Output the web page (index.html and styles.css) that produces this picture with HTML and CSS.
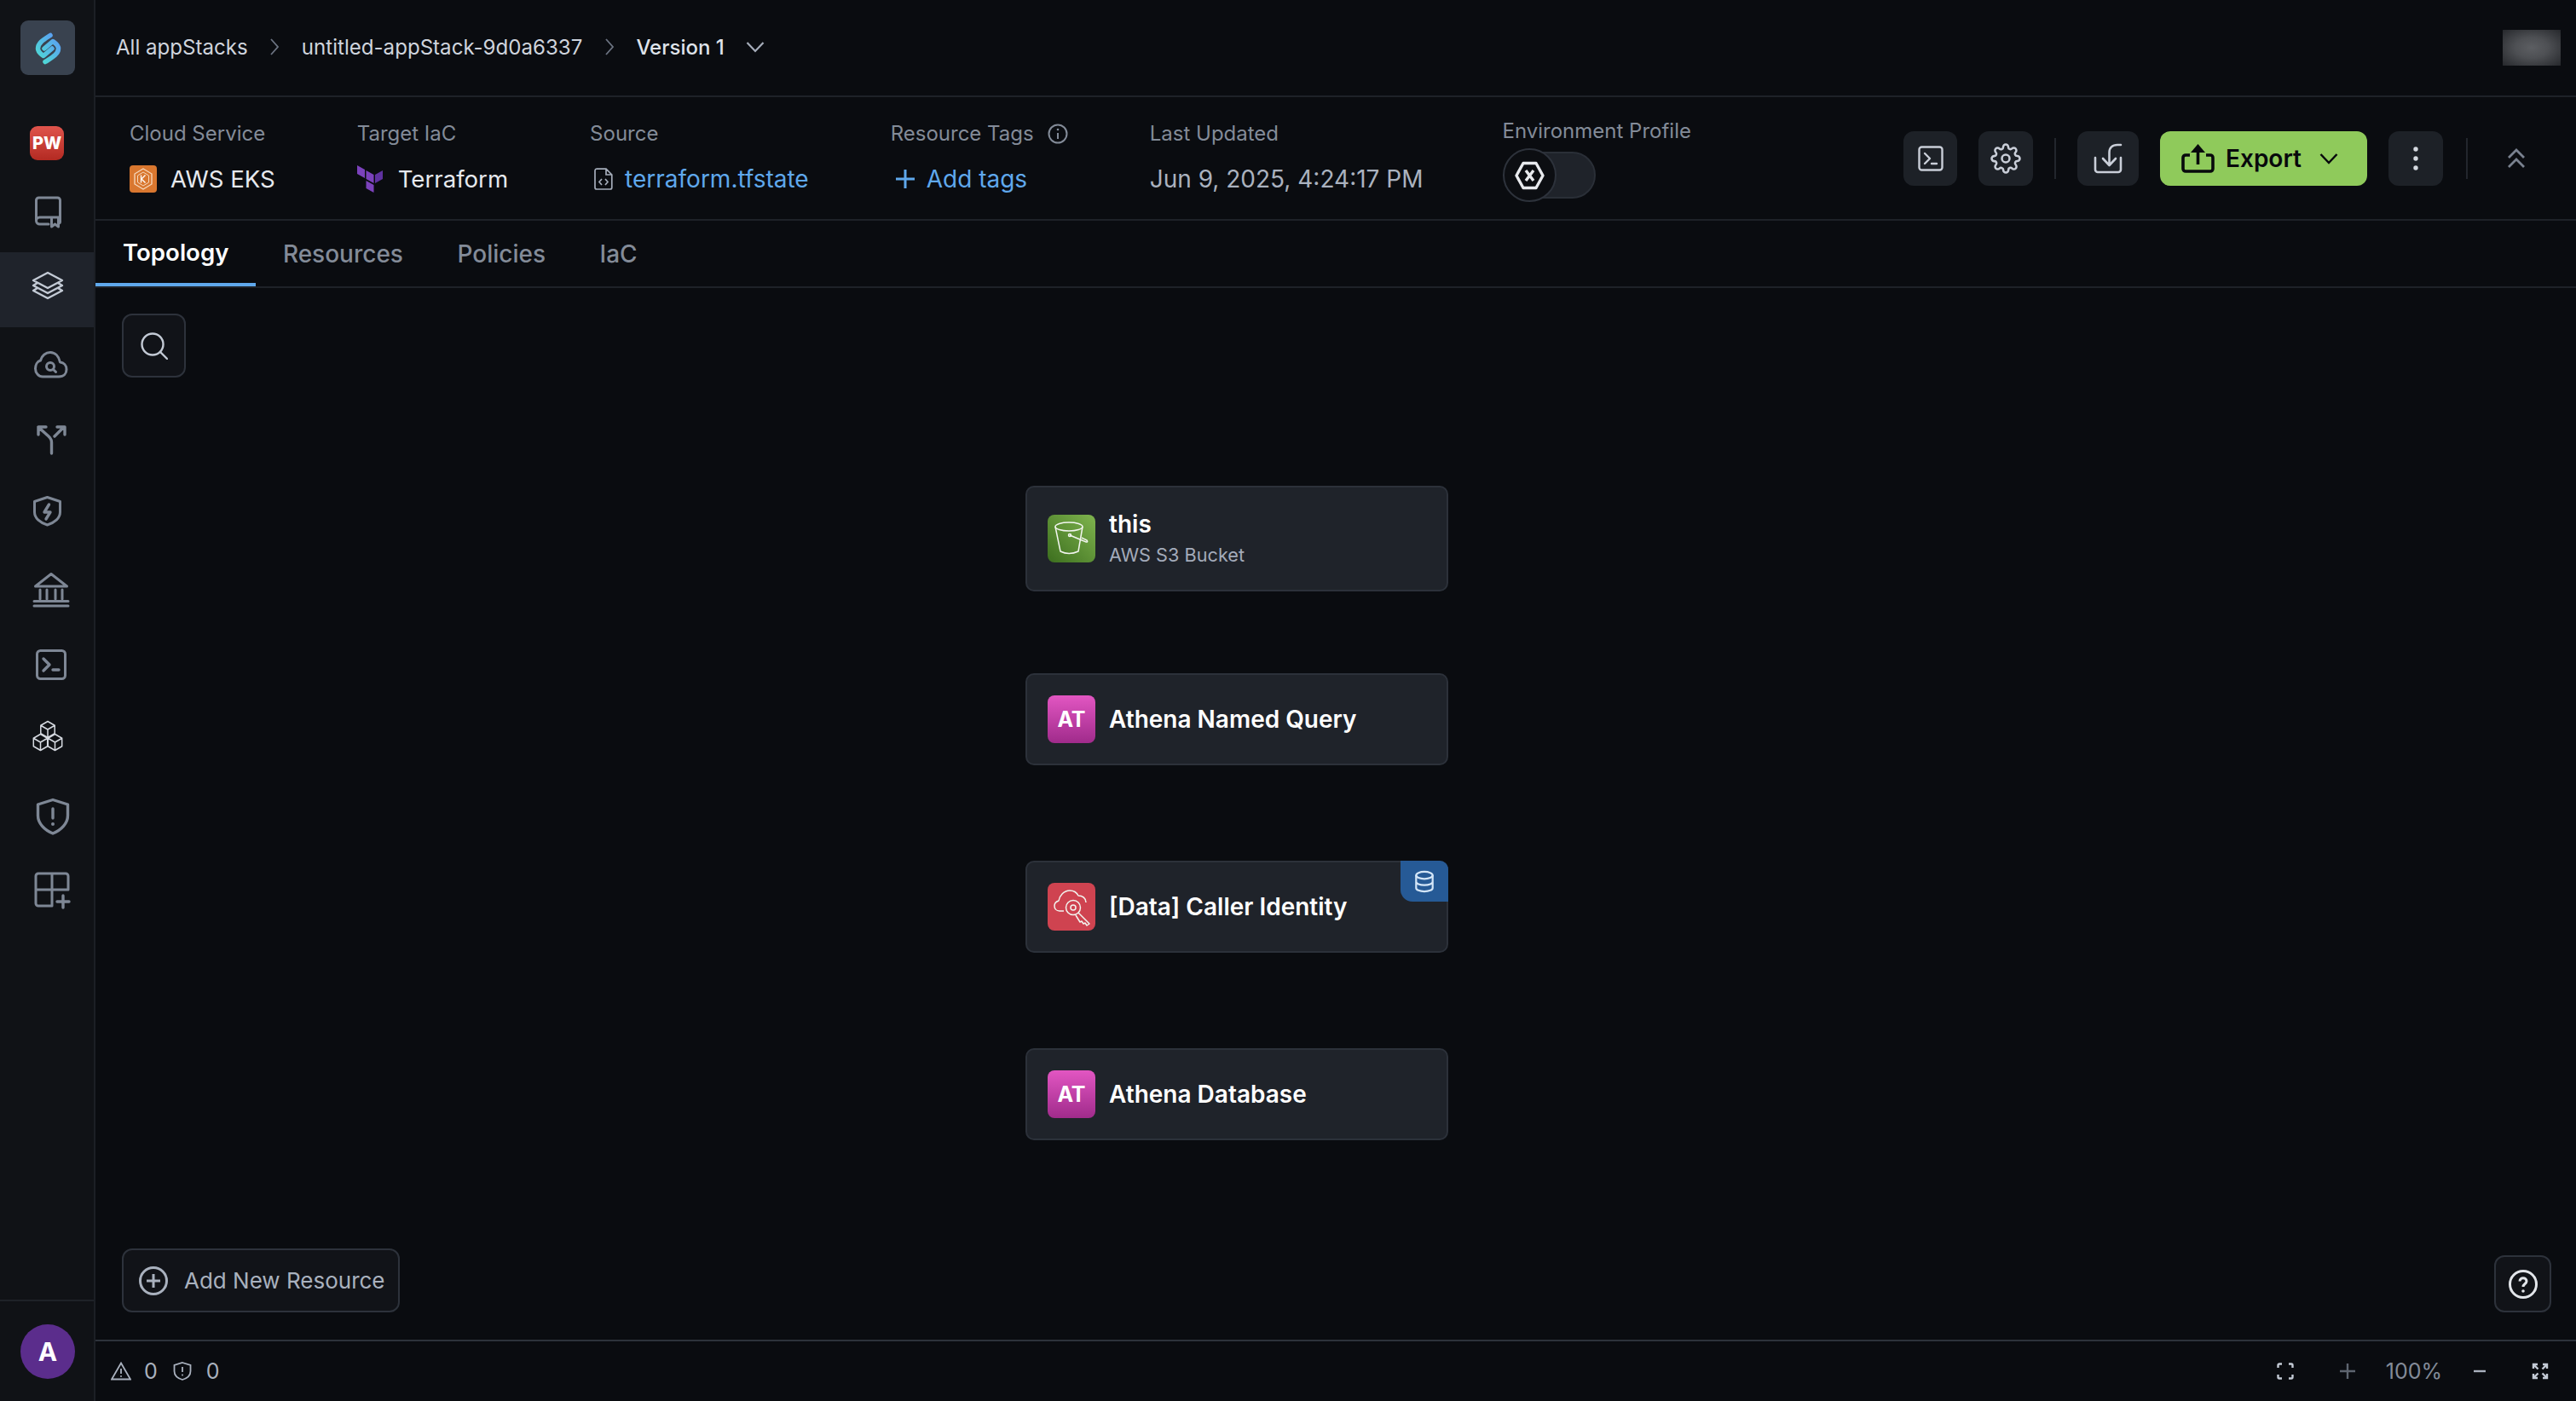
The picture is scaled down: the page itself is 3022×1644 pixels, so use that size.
FILE: index.html
```html
<!DOCTYPE html>
<html lang="en">
<head>
<meta charset="utf-8">
<title>appStack Topology</title>
<link rel="stylesheet" href="styles.css">
</head>
<body>
<div class="app">
  <aside class="sidebar">
    <div class="logo">
      <svg class="logo-mark" viewBox="0 0 52 52">
        <defs><linearGradient id="lg" x1="0" y1="1" x2="1" y2="0"><stop offset="0" stop-color="#4fd6d6"/><stop offset="1" stop-color="#5aa2f2"/></linearGradient></defs>
        <path d="M29 11.500C22 16 14.500 20 14.500 27 14.500 30 16.500 32 19 34L21 35.500 31 27" fill="none" stroke="url(#lg)" stroke-width="5.500" stroke-linecap="round" stroke-linejoin="round"/>
        <path d="M23 42.500C30 38 38.500 34 38.500 27 38.500 24 36.500 22 34 20L32 18.500 22 27" fill="none" stroke="url(#lg)" stroke-width="5.500" stroke-linecap="round" stroke-linejoin="round"/>
      </svg>
    </div>
    <nav class="nav">
      <div class="nav-item"><span class="pw">PW</span></div>
      <div class="nav-item"><svg class="nav-icon" viewBox="0 0 56 56"><path d="M15.500 35V11a3 3 0 0 1 3-3h22a3 3 0 0 1 3 3v25a2 2 0 0 1-1 2M15.500 35a4 4 0 0 1 4-4h24M15.500 35a4 4 0 0 0 4 4H30M33.500 32v10l4-3 4 3V32"/></svg></div>
      <div class="nav-item active"><svg class="nav-icon light" viewBox="0 0 56 56"><path d="M29 8 46 17 29 26 12 17ZM17 20 12 23 29 32 46 23 41 20M17 26 12 29 29 38 46 29 41 26"/></svg></div>
      <div class="nav-item"><svg class="nav-icon" viewBox="0 0 56 56"><path d="M23 42H42C48 42 51 38 51 33.500 51 29 48 25.500 43.500 25 42 18 37.500 13.500 32 13.500 26.500 13.500 22 17.500 20.500 23 16.500 24 14.500 28.500 14.500 32.500 14.500 38 18.500 42 23 42Z"/><circle cx="32" cy="30" r="4.500"/><path d="M35.500 33.500 38.500 36.500"/></svg></div>
      <div class="nav-item"><svg class="nav-icon thick" viewBox="0 0 56 56"><path d="M33.500 44V31C33.500 25 28 23 18 13M18 22V13H27M37 24 48 13M40 13H49V22"/></svg></div>
      <div class="nav-item"><svg class="nav-icon" viewBox="0 0 56 56"><path d="M28.500 7.500 43.500 12.500V25C43.500 32 37 37.500 28.500 40 20 37.500 13.500 32 13.500 25V12.500Z"/><path class="fat" d="M30.500 16 25 25H32L27 33"/></svg></div>
      <div class="nav-item"><svg class="nav-icon" viewBox="0 0 56 56"><path d="M33 9.500 14.500 24H51.500ZM20 28V39M28 28V39M38 28V39M46 28V39M13 41.500H53M13 47H53"/></svg></div>
      <div class="nav-item"><svg class="nav-icon" viewBox="0 0 56 56"><rect x="16.500" y="11.500" width="33" height="33" rx="4"/><path class="fat" d="M24 21 31 28 24 35M35 34H42"/></svg></div>
      <div class="nav-item"><svg class="nav-icon cubes" viewBox="0 0 56 56"><g transform="translate(29 16)"><path d="M0-9.500 8.200-4.750V4.750L0 9.500-8.200 4.750V-4.750ZM-8.200-4.750 0 0 8.200-4.750M0 0V9.500"/></g><g transform="translate(20.500 31)"><path d="M0-9.500 8.200-4.750V4.750L0 9.500-8.200 4.750V-4.750ZM-8.200-4.750 0 0 8.200-4.750M0 0V9.500"/></g><g transform="translate(37.500 31)"><path d="M0-9.500 8.200-4.750V4.750L0 9.500-8.200 4.750V-4.750ZM-8.200-4.750 0 0 8.200-4.750M0 0V9.500"/></g></svg></div>
      <div class="nav-item"><svg class="nav-icon thick" viewBox="0 0 56 56"><path d="M35 10.500 52.500 16V29C52.500 38 45 46 35 50 25 46 17.500 38 17.500 29V16ZM35 21V32"/><circle class="dot" cx="35" cy="39" r="2"/></svg></div>
      <div class="nav-item"><svg class="nav-icon" viewBox="0 0 56 56"><path d="M33 47H18a3 3 0 0 1-3-3V12a3 3 0 0 1 3-3H50a3 3 0 0 1 3 3V28H15M34 9V47"/><path class="fat" d="M47 35V49M40 42H54"/></svg></div>
    </nav>
    <div class="user"><span class="avatar">A</span></div>
  </aside>

  <main class="main">
    <header class="topbar">
      <span class="crumb">All appStacks</span>
      <svg class="crumb-sep" viewBox="0 0 12 22"><path d="M2 2 10 11 2 20"/></svg>
      <span class="crumb">untitled-appStack-9d0a6337</span>
      <svg class="crumb-sep" viewBox="0 0 12 22"><path d="M2 2 10 11 2 20"/></svg>
      <span class="crumb current">Version 1</span>
      <svg class="crumb-down" viewBox="0 0 22 14"><path d="M1.500 2 11 12 20.500 2"/></svg>
      <div class="blurred"></div>
    </header>

    <section class="infobar">
      <div class="meta">
        <div class="field">
          <span class="label">Cloud Service</span>
          <span class="value">
            <svg class="val-icon" viewBox="0 0 32 32"><rect width="32" height="32" rx="4" fill="#d9772f"/><path d="M16 4 26 10V22L16 28 6 22V10Z" fill="none" stroke="#f6d9bd" stroke-width="1.300"/><path d="M16 8 22.500 12V20L16 24 9.500 20V12Z" fill="none" stroke="#f6d9bd" stroke-width="1"/><path d="M13.500 11.500V20.500M18.500 11.500 14 16 18.500 20.500" fill="none" stroke="#fff" stroke-width="1.300"/></svg>
            AWS EKS
          </span>
        </div>
        <div class="field">
          <span class="label">Target IaC</span>
          <span class="value">
            <svg class="val-icon tf" viewBox="0 0 30 32"><path d="M0 0 9 5V15L0 10Z" fill="#7b42bc"/><path d="M10.500 6 19.500 11V21L10.500 16Z" fill="#7b42bc"/><path d="M21 11 30 6V16L21 21Z" fill="#5f32a0"/><path d="M10.500 18 19.500 23V32L10.500 27Z" fill="#7b42bc"/></svg>
            Terraform
          </span>
        </div>
        <div class="field">
          <span class="label">Source</span>
          <span class="value link">
            <svg class="val-icon file" viewBox="0 0 22 26"><path d="M3 1.200H14L20.800 8V23a2 2 0 0 1-2 2H3a2 2 0 0 1-2-2V3a2 2 0 0 1 2-1.800ZM14 1.200V8H20.800M9 13 6 16.500 9 20M13 13 16 16.500 13 20"/></svg>
            terraform.tfstate
          </span>
        </div>
        <div class="field">
          <span class="label">Resource Tags
            <svg class="info" viewBox="0 0 24 24"><circle cx="12" cy="12" r="10.500"/><path d="M12 11V18"/><circle class="dot" cx="12" cy="7" r="1.300"/></svg>
          </span>
          <span class="value link">
            <svg class="plus" viewBox="0 0 24 24"><path d="M12 1V23M1 12H23"/></svg>
            Add tags
          </span>
        </div>
        <div class="field">
          <span class="label">Last Updated</span>
          <span class="value muted">Jun 9, 2025, 4:24:17 PM</span>
        </div>
        <div class="field env">
          <span class="label">Environment Profile</span>
          <div class="toggle">
            <span class="track"></span>
            <span class="knob"><svg viewBox="0 0 35 34"><path class="hex" d="M10 2.500H25L33 17 25 31.500H10L2 17Z"/><path class="cross" d="M13 11 22 23M22 11 13 23"/></svg></span>
          </div>
        </div>
      </div>
      <div class="actions">
        <button class="icon-btn narrow"><svg class="act" viewBox="0 0 30 30"><rect x="1.500" y="1.500" width="27" height="27" rx="3"/><path d="M8 9 14 15 8 21M16 21H22"/></svg></button>
        <button class="icon-btn"><svg class="act gear" viewBox="0 0 24 24"><path d="M12 15a3 3 0 1 0 0-6 3 3 0 0 0 0 6z"/><path d="M19.400 15a1.650 1.650 0 0 0 .33 1.820l.06.06a2 2 0 0 1 0 2.830 2 2 0 0 1-2.830 0l-.06-.06a1.650 1.650 0 0 0-1.820-.33 1.650 1.650 0 0 0-1 1.510V21a2 2 0 0 1-2 2 2 2 0 0 1-2-2v-.09A1.650 1.650 0 0 0 9 19.400a1.650 1.650 0 0 0-1.820.33l-.06.06a2 2 0 0 1-2.830 0 2 2 0 0 1 0-2.830l.06-.06a1.650 1.650 0 0 0 .33-1.820 1.650 1.650 0 0 0-1.510-1H3a2 2 0 0 1-2-2 2 2 0 0 1 2-2h.09A1.650 1.650 0 0 0 4.600 9a1.650 1.650 0 0 0-.33-1.820l-.06-.06a2 2 0 0 1 0-2.830 2 2 0 0 1 2.830 0l.06.06a1.650 1.650 0 0 0 1.820.33H9a1.650 1.650 0 0 0 1-1.510V3a2 2 0 0 1 2-2 2 2 0 0 1 2 2v.09a1.650 1.650 0 0 0 1 1.510 1.650 1.650 0 0 0 1.820-.33l.06-.06a2 2 0 0 1 2.830 0 2 2 0 0 1 0 2.830l-.06.06a1.650 1.650 0 0 0-.33 1.820V9a1.650 1.650 0 0 0 1.510 1H21a2 2 0 0 1 2 2 2 2 0 0 1-2 2h-.09a1.650 1.650 0 0 0-1.510 1z"/></svg></button>
        <span class="divider"></span>
        <button class="icon-btn wide"><svg class="act import" viewBox="0 0 34 36"><path d="M2 17V31a3 3 0 0 0 3 3H29a3 3 0 0 0 3-3V17M32 2H28C22 2 18.500 5.500 18.500 11V25M11 18 18.500 26 26 18"/></svg></button>
        <button class="export">
          <svg class="exp-icon" viewBox="0 0 39 34"><path d="M10 13H5a3 3 0 0 0-3 3V29a3 3 0 0 0 3 3H34a3 3 0 0 0 3-3V16a3 3 0 0 0-3-3H29M19.500 24V4"/><path class="exp-head" d="M19.500 0 28 10H11Z"/></svg>
          <span>Export</span>
          <svg class="exp-chev" viewBox="0 0 22 14"><path d="M1.500 2 11 12 20.500 2"/></svg>
        </button>
        <button class="icon-btn"><svg class="dots" viewBox="0 0 8 28"><circle cx="4" cy="3" r="2.700"/><circle cx="4" cy="14" r="2.700"/><circle cx="4" cy="25" r="2.700"/></svg></button>
        <span class="divider last"></span>
        <svg class="collapse" viewBox="0 0 22 24"><path d="M2 11 11 2 20 11M2 22 11 13 20 22"/></svg>
      </div>
    </section>

    <nav class="tabs">
      <span class="tab selected">Topology</span>
      <span class="tab">Resources</span>
      <span class="tab">Policies</span>
      <span class="tab">IaC</span>
    </nav>

    <section class="canvas">
      <button class="tool search"><svg viewBox="0 0 32 32"><circle cx="14" cy="14" r="12.500"/><path d="M23 23 31 31"/></svg></button>

      <div class="node tall">
        <span class="res green"><svg viewBox="0 0 56 56"><ellipse cx="25" cy="14" rx="16" ry="5"/><path d="M9 14 15 43Q25 48 36 43L41 14M26 24 44 31.500Q48 33 46 30L40 27"/><circle cx="26" cy="24" r="1.500"/></svg></span>
        <div class="res-text">
          <span class="res-name">this</span>
          <span class="res-sub">AWS S3 Bucket</span>
        </div>
      </div>
      <div class="node">
        <span class="res pink">AT</span>
        <span class="res-name">Athena Named Query</span>
      </div>
      <div class="node">
        <span class="res red"><svg viewBox="0 0 56 56"><path d="M19 33H14C10 33 8 30 8 27 8 24 10 22 13 21 14 15 19 9 26 9 31 9 34 11 36 15 41 15 45 18 45 23"/><circle cx="30" cy="29" r="8.500"/><circle cx="30" cy="29" r="3"/><path d="M36 35 49 48 46 50 44 47 42 48 40 45 38 46 33 38"/></svg></span>
        <span class="res-name">[Data] Caller Identity</span>
        <span class="badge"><svg viewBox="0 0 26 28"><ellipse cx="13" cy="6" rx="10.500" ry="4.500"/><path d="M2.500 6V22C2.500 24.500 7 26.500 13 26.500S23.500 24.500 23.500 22V6M2.500 14C2.500 16.500 7 18.500 13 18.500S23.500 16.500 23.500 14"/></svg></span>
      </div>
      <div class="node">
        <span class="res pink">AT</span>
        <span class="res-name">Athena Database</span>
      </div>

      <button class="add-res">
        <svg viewBox="0 0 34 34"><circle cx="17" cy="17" r="15.500"/><path d="M17 9V25M9 17H25"/></svg>
        Add New Resource
      </button>
      <button class="tool help"><svg viewBox="0 0 34 34"><circle cx="17" cy="17" r="15.500"/><path d="M13 13.500C13 8.500 21 8.500 21 13.500 21 16.500 17 16.500 17 20"/><circle class="dot" cx="17" cy="25" r="1.800"/></svg></button>
    </section>

    <footer class="statusbar">
      <div class="stats">
        <svg class="st warn" viewBox="0 0 24 22"><path d="M12 1.500 23 20.500H1ZM12 8V14"/><circle class="dot" cx="12" cy="17" r="1"/></svg>
        <span class="count">0</span>
        <svg class="st shield" viewBox="0 0 22 22"><path d="M11 1 20.500 4V11C20.500 16 16 19.500 11 21 6 19.500 1.500 16 1.500 11V4ZM11 6V12"/><circle class="dot" cx="11" cy="15.500" r="1"/></svg>
        <span class="count">0</span>
      </div>
      <div class="zoom">
        <svg class="zi fit" viewBox="0 0 20 20"><path d="M1.500 6V3a1.500 1.500 0 0 1 1.500-1.500H6M14 1.500H17A1.500 1.500 0 0 1 18.500 3V6M18.500 14V17A1.500 1.500 0 0 1 17 18.500H14M6 18.500H3A1.500 1.500 0 0 1 1.500 17V14"/></svg>
        <svg class="zi zplus" viewBox="0 0 20 20"><path d="M10 1V19M1 10H19"/></svg>
        <span class="pct">100%</span>
        <svg class="zi zminus" viewBox="0 0 16 6"><path d="M1 3H15"/></svg>
        <svg class="zi expand" viewBox="0 0 20 20"><path d="M2 7V2H7M13 2H18V7M18 13V18H13M7 18H2V13M2 2 7.500 7.500M18 2 12.500 7.500M18 18 12.500 12.500M2 18 7.500 12.500"/></svg>
      </div>
    </footer>
  </main>
</div>
</body>
</html>
```

FILE: styles.css
```css
* { box-sizing: border-box; }
html, body { margin: 0; height: 100%; }
body {
  background: #0a0c10;
  color: #e6e9ee;
  font-family: Inter, "Liberation Sans", sans-serif;
  overflow: hidden;
}
button { font-family: inherit; cursor: pointer; }
svg { display: block; flex: none; }

.app { display: flex; width: 3022px; height: 1644px; }

/* Sidebar */
.sidebar {
  width: 112px;
  flex: none;
  display: flex;
  flex-direction: column;
  background: #101216;
  border-right: 2px solid #1c1f25;
}
.logo {
  width: 64px; height: 64px;
  margin: 24px 0 0 24px;
  background: #39424f;
  border-radius: 9px;
  display: flex; align-items: center; justify-content: center;
}
.logo-mark { width: 52px; height: 52px; }
.nav { margin-top: 32px; flex: 1; }
.nav-item {
  height: 88px;
  display: flex; align-items: center; justify-content: center;
}
.nav-item.active { background: #1f232b; }
.nav-icon {
  width: 56px; height: 56px;
  fill: none;
  stroke: #7e8795;
  stroke-width: 3;
  stroke-linecap: round;
  stroke-linejoin: round;
}
.nav-icon.light { stroke: #c3cad5; stroke-width: 2.4; }
.nav-icon.thick { stroke-width: 3.4; }
.nav-icon.cubes { stroke: #d5d9e0; stroke-width: 1.5; }
.nav-icon .fat { stroke-width: 3.4; }
.nav-icon .dot { fill: #7e8795; stroke: none; }
.pw {
  width: 40px; height: 40px;
  margin-top: 8px;
  border-radius: 9px;
  background: linear-gradient(180deg, #e0544c, #b32a22);
  color: #fff;
  font-size: 20px; font-weight: 800;
  display: flex; align-items: center; justify-content: center;
}
.user {
  height: 119px;
  border-top: 2px solid #1e2228;
  padding: 27px 0 0 24px;
}
.avatar {
  width: 64px; height: 64px;
  border-radius: 50%;
  background: #5b2d8c;
  color: #fff;
  font-size: 30px; font-weight: 700;
  display: flex; align-items: center; justify-content: center;
}

/* Main */
.main { flex: 1; display: flex; flex-direction: column; min-width: 0; }

.topbar {
  height: 114px;
  flex: none;
  display: flex; align-items: center;
  padding: 0 18px 2px 24px;
  border-bottom: 2px solid #1e2228;
}
.crumb { font-size: 24.1px; color: #cfd4dd; white-space: nowrap; }
.crumb.current { font-size: 24px; font-weight: 500; color: #dfe3ea; }
.crumb-sep {
  width: 12px; height: 22px;
  margin: 0 25.5px;
  fill: none; stroke: #6c7482; stroke-width: 1.8;
}
.crumb-down {
  width: 22px; height: 14px;
  margin-left: 25px;
  fill: none; stroke: #a6adba; stroke-width: 2.2;
}
.blurred {
  width: 68px; height: 42px;
  margin-left: auto;
  margin-bottom: -2px;
  background: radial-gradient(ellipse at center, #5c5e62 0%, #4e5054 40%, #26282c 100%);
}

.infobar {
  height: 145px;
  flex: none;
  display: flex;
  padding: 0 59px 0 40px;
  border-bottom: 2px solid #1e2228;
}
.meta { display: flex; gap: 96px; padding-top: 26px; }
.field { display: flex; flex-direction: column; }
.label {
  font-size: 24px;
  line-height: 34px;
  color: #838b98;
  white-space: nowrap;
  display: flex; align-items: center; gap: 16px;
}
.value {
  margin-top: 18px;
  font-size: 27.6px;
  line-height: 36px;
  color: #e6e9ee;
  white-space: nowrap;
  display: flex; align-items: center; gap: 16px;
}
.value.link { font-size: 28px; color: #5fa8ec; }
.value.muted { font-size: 28px; color: #aab2bf; }
.val-icon { width: 32px; height: 32px; }
.val-icon.tf { width: 30px; height: 32px; margin-right: 2px; }
.val-icon.file {
  width: 22px; height: 26px;
  margin: 0 -2px 0 5px;
  fill: none; stroke: #a5adba; stroke-width: 1.700;
}
.info { width: 24px; height: 24px; fill: none; stroke: #838b98; stroke-width: 2; }
.info .dot { fill: #838b98; stroke: none; }
.plus {
  width: 24px; height: 24px;
  margin: 0 -3px 0 5px;
  fill: none; stroke: #5fa8ec; stroke-width: 3;
}
.env { margin: -3px 0 0 -3px; }
.toggle { position: relative; width: 109px; height: 63px; margin-top: 3px; }
.track {
  position: absolute; left: 4px; top: 4px;
  width: 105px; height: 55px;
  border-radius: 28px;
  background: #1f232a;
  border: 2px solid #2a2f37;
}
.knob {
  position: absolute; left: 0; top: 0;
  width: 63px; height: 63px;
  border-radius: 50%;
  background: #0c0e12;
  border: 2px solid #2d323b;
  display: flex; align-items: center; justify-content: center;
}
.knob svg { width: 35px; height: 34px; fill: none; }
.hex { stroke: #e8eaee; stroke-width: 3.4; stroke-linejoin: round; }
.cross { stroke: #e8eaee; stroke-width: 3.4; }

.actions { margin-left: auto; align-self: center; display: flex; align-items: center; gap: 25px; }
.icon-btn {
  width: 64px; height: 64px;
  border: 0; border-radius: 12px;
  background: #1d2127;
  display: flex; align-items: center; justify-content: center;
  padding: 0;
}
.icon-btn.narrow { width: 63px; }
.icon-btn.wide { width: 72px; }
.act {
  width: 30px; height: 30px;
  fill: none; stroke: #c9ced8; stroke-width: 2.400;
  stroke-linecap: round; stroke-linejoin: round;
}
.act.gear { width: 36px; height: 36px; stroke-width: 1.700; }
.act.import { width: 34px; height: 36px; stroke-width: 2.600; }
.divider { width: 2px; height: 48px; background: #22262d; }
.divider.last { margin-left: 2px; }
.export {
  width: 243px; height: 64px;
  border: 0; border-radius: 12px;
  background: #8fca5b;
  color: #08090c;
  font-size: 28px; font-weight: 600;
  display: flex; align-items: center;
  padding: 0 0 0 25px;
}
.exp-icon { width: 39px; height: 34px; margin-right: 13px; fill: none; stroke: #08090c; stroke-width: 3.600; stroke-linejoin: round; }
.exp-head { fill: #08090c; stroke: none; }
.exp-chev { width: 22px; height: 14px; margin-left: 21px; fill: none; stroke: #08090c; stroke-width: 2.500; }
.dots { width: 8px; height: 28px; fill: #d5d9e0; }
.collapse {
  width: 22px; height: 24px;
  margin-left: 21px;
  fill: none; stroke: #7a8290; stroke-width: 2.800;
}

.tabs {
  height: 79px;
  flex: none;
  display: flex;
  border-bottom: 2px solid #1e2228;
}
.tab {
  padding: 0 31.5px 0 32px;
  font-size: 28px; font-weight: 500;
  line-height: 78px;
  color: #838b98;
  border-bottom: 4px solid transparent;
  height: 77px;
}
.tab.selected {
  font-size: 27.6px;
  line-height: 74px;
  color: #fff;
  font-weight: 600;
  border-bottom-color: #5fa8ec;
}

/* Canvas */
.canvas {
  position: relative;
  flex: 1;
  display: flex; flex-direction: column;
  padding: 232px 0 0 1091px;
  min-height: 0;
}
.node {
  position: relative;
  width: 496px;
  height: 108px;
  margin-bottom: 112px;
  flex: none;
  background: #1f232a;
  border: 2px solid #2c313a;
  border-radius: 10px;
  display: flex; align-items: center; gap: 16px;
  padding-left: 24px;
}
.node.tall { height: 124px; margin-bottom: 96px; }
.res {
  width: 56px; height: 56px;
  flex: none;
  border-radius: 8px;
  display: flex; align-items: center; justify-content: center;
  color: #fff;
  font-size: 25px; font-weight: 700;
}
.res svg { width: 56px; height: 56px; fill: none; stroke: #f2f5ef; stroke-width: 1.500; stroke-linejoin: round; }
.green { background: linear-gradient(45deg, #3c6e1e, #7fb44e); }
.pink { background: linear-gradient(180deg, #e256c2, #a02b8b); }
.red { background: #cf4350; }
.res-text { display: flex; flex-direction: column; gap: 2px; }
.res-name { font-size: 28px; font-weight: 600; line-height: 36px; color: #fff; white-space: nowrap; }
.res-sub { font-size: 21.7px; line-height: 32px; color: #a3abba; white-space: nowrap; }
.badge {
  position: absolute; right: -2px; top: -2px;
  width: 56px; height: 48px;
  background: #265a96;
  border-radius: 0 10px 0 14px;
  display: flex; align-items: center; justify-content: center;
}
.badge svg { width: 24px; height: 27px; fill: none; stroke: #d3e5f7; stroke-width: 2.400; }

.tool {
  position: absolute;
  width: 75px; height: 75px;
  background: #111318;
  border: 2px solid #2d323b;
  border-radius: 12px;
  display: flex; align-items: center; justify-content: center;
  padding: 0;
}
.tool.search { left: 31px; top: 30px; }
.tool.search svg { width: 32px; height: 32px; fill: none; stroke: #c3cad5; stroke-width: 2.400; stroke-linecap: round; }
.tool.help { right: 29px; bottom: 32px; width: 67px; height: 67px; }
.tool.help svg { width: 34px; height: 34px; fill: none; stroke: #e2e5ea; stroke-width: 3; }
.tool.help .dot { fill: #e2e5ea; stroke: none; }
.add-res {
  position: absolute; left: 31px; bottom: 32px;
  width: 326px; height: 75px;
  background: #111318;
  border: 2px solid #2d323b;
  border-radius: 12px;
  color: #a9b1be;
  font-size: 26px;
  display: flex; align-items: center; gap: 19px;
  padding: 0 0 0 18px;
  white-space: nowrap;
}
.add-res svg { width: 34px; height: 34px; fill: none; stroke: #a9b1be; stroke-width: 3; }

/* Status bar */
.statusbar {
  height: 72px;
  flex: none;
  border-top: 2px solid #2d323b;
  display: flex; align-items: center; justify-content: space-between;
  padding: 0 32px 0 18px;
}
.stats { display: flex; align-items: center; }
.st { fill: none; stroke: #a9b1be; stroke-width: 1.800; }
.st .dot { fill: #a9b1be; stroke: none; }
.st.warn { width: 24px; height: 22px; margin-right: 15px; }
.st.shield { width: 22px; height: 22px; margin: 0 17px 0 18px; }
.count { font-size: 25px; color: #a9b1be; }
.zoom { display: flex; align-items: center; }
.zi { fill: none; stroke: #c3cad5; stroke-width: 2.400; }
.zi.fit { width: 20px; height: 20px; }
.zi.zplus { width: 20px; height: 20px; margin-left: 53px; stroke: #5e6570; }
.pct { margin-left: 35px; font-size: 25px; color: #838b98; }
.zi.zminus { width: 16px; height: 6px; margin-left: 36px; stroke: #a9b1be; }
.zi.expand { width: 20px; height: 20px; margin-left: 53px; }
```
